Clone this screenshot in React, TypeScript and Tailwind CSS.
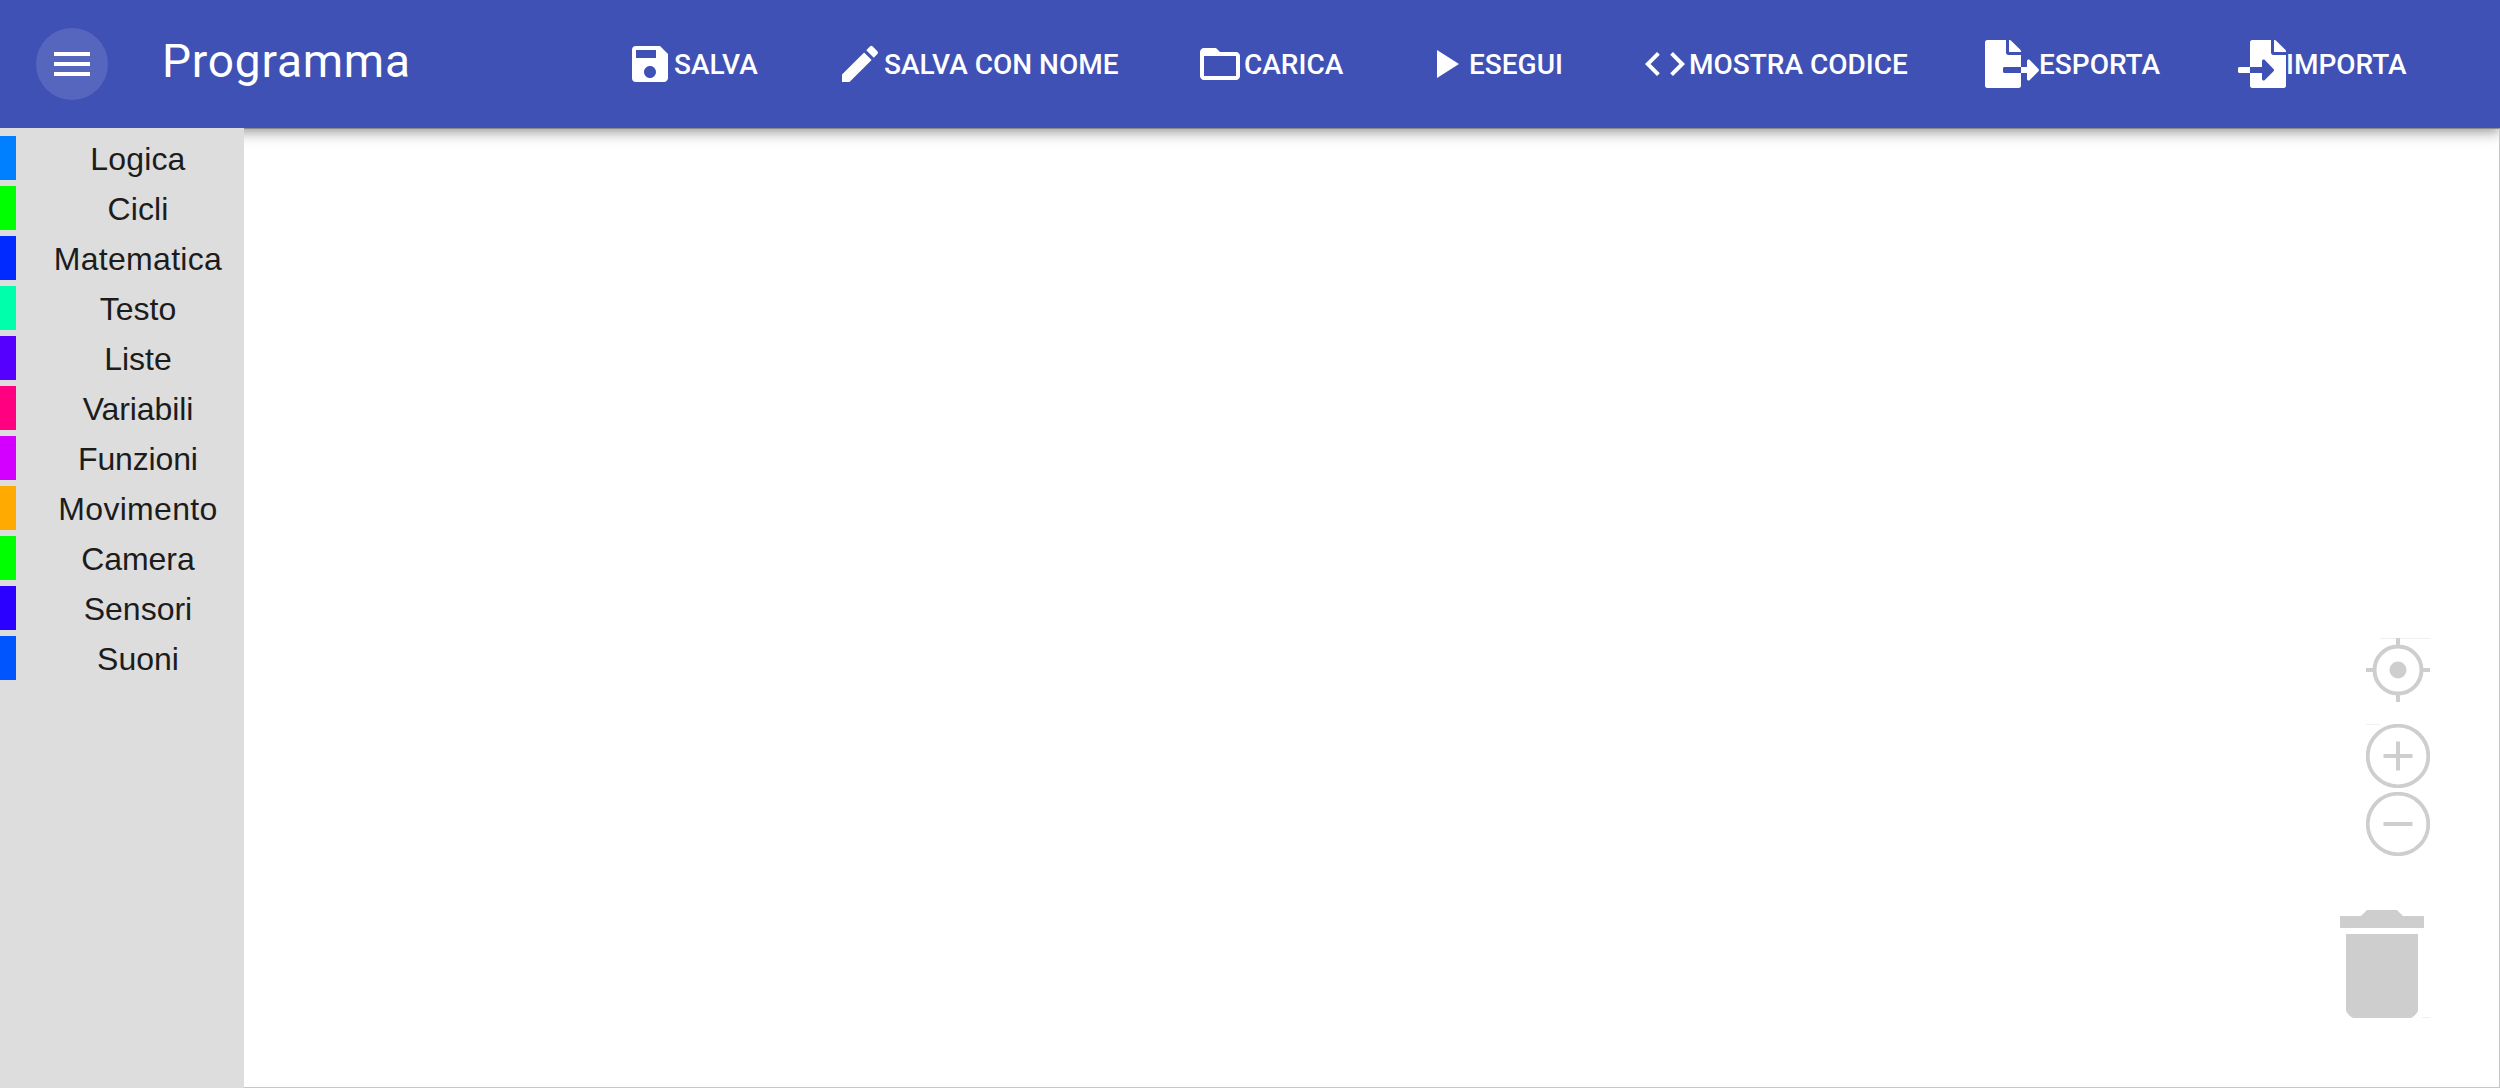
import React from "react";
import { MdMenu, MdSave, MdEdit, MdPlayArrow, MdCode } from "react-icons/md";
import { FaFileExport, FaFileImport } from "react-icons/fa";

const Folder = ({ className }: { className?: string }) => (
  <svg viewBox="0 0 24 24" fill="currentColor" className={className}>
    <path d="M20 6h-8l-2-2H4c-1.1 0-1.99.9-1.99 2L2 18c0 1.1.9 2 2 2h16c1.1 0 2-.9 2-2V8c0-1.1-.9-2-2-2zm0 12H4V8h16v10z" />
  </svg>
);

const actions = [
  { label: "SALVA", Icon: MdSave, width: "w-[210px]", icon: "size-12" },
  { label: "SALVA CON NOME", Icon: MdEdit, width: "w-[360px]", icon: "size-12" },
  { label: "CARICA", Icon: Folder, width: "w-[225px]", icon: "size-12" },
  { label: "ESEGUI", Icon: MdPlayArrow, width: "w-[220px]", icon: "size-12" },
  { label: "MOSTRA CODICE", Icon: MdCode, width: "w-[344px]", icon: "size-12" },
  { label: "ESPORTA", Icon: FaFileExport, width: "w-[253px]", icon: "h-12 w-[54px]" },
  { label: "IMPORTA", Icon: FaFileImport, width: "w-[200px]", icon: "size-12" },
];

const categories = [
  ["Logica", "bg-[#0080ff]", "tracking-[0.15px]"],
  ["Cicli", "bg-[#00ff00]", "tracking-[0.15px]"],
  ["Matematica", "bg-[#002aff]", "tracking-[0.3px]"],
  ["Testo", "bg-[#00ffaa]", "tracking-normal"],
  ["Liste", "bg-[#5500ff]", "tracking-normal"],
  ["Variabili", "bg-[#ff0080]", "tracking-[-0.1px]"],
  ["Funzioni", "bg-[#d400ff]", "tracking-[-0.15px]"],
  ["Movimento", "bg-[#ffaa00]", "tracking-[0.3px]"],
  ["Camera", "bg-[#00ff00]", "tracking-[-0.1px]"],
  ["Sensori", "bg-[#2b00ff]", "tracking-normal"],
  ["Suoni", "bg-[#0055ff]", "tracking-normal"],
];

function Header() {
  return (
    <header className="flex h-32 shrink-0 items-center bg-[#3f51b5] pl-9 text-white shadow-[0_4px_8px_-2px_rgba(0,0,0,0.2),0_8px_10px_0_rgba(0,0,0,0.14),0_2px_20px_0_rgba(0,0,0,0.12)]">
      <button className="flex size-[72px] items-center justify-center rounded-full bg-white/12">
        <MdMenu className="size-12" />
      </button>
      <h1 className="ml-[54px] w-[464px] pb-[6px] font-['Roboto'] text-[46px] leading-none tracking-[0.8px]">
        Programma
      </h1>
      <nav className="flex items-center font-['Roboto'] text-[28px] font-medium leading-none">
        {actions.map(({ label, Icon, width, icon }) => (
          <button key={label} className={`flex items-center whitespace-nowrap ${width}`}>
            <Icon className={`shrink-0 ${icon}`} />
            <span className="pt-0.5">{label}</span>
          </button>
        ))}
      </nav>
    </header>
  );
}

function Toolbox() {
  return (
    <aside className="z-10 flex w-[244px] shrink-0 flex-col gap-1.5 bg-[#ddd] pt-2">
      {categories.map(([name, color, tracking]) => (
        <div key={name} className="flex h-11 items-center">
          <span className={`h-11 w-4 ${color}`} />
          <span
            className={`ml-4 w-[213px] pt-0.5 text-center font-['Liberation_Sans'] text-[32px] leading-[44px] text-[#1c1c1c] ${tracking}`}
          >
            {name}
          </span>
        </div>
      ))}
    </aside>
  );
}

function Controls() {
  return (
    <div className="flex flex-col items-end text-[#cecece]">
      <div className="mr-[69px] flex flex-col">
        <svg viewBox="0 0 64 64" className="size-16" fill="none" stroke="currentColor" strokeWidth="4">
          <circle cx="32" cy="32" r="23.5" />
          <circle cx="32" cy="32" r="8.5" fill="currentColor" stroke="none" />
          <path d="M32 0v8M32 56v8M0 32h8M56 32h8" />
          <path d="M14 .5h50" strokeWidth="1" opacity=".3" />
        </svg>
        <svg viewBox="0 0 64 64" className="mt-[22px] size-16" fill="none" stroke="currentColor" strokeWidth="4">
          <circle cx="32" cy="32" r="30.3" strokeWidth="3.8" />
          <path d="M17.5 32h29M32 17.5v29" />
          <path d="M0 .5h14" strokeWidth="1" opacity=".3" />
        </svg>
        <svg viewBox="0 0 64 64" className="mt-1 size-16" fill="none" stroke="currentColor" strokeWidth="4">
          <circle cx="32" cy="32" r="30.3" strokeWidth="3.8" />
          <path d="M17.5 32h29" />
        </svg>
      </div>
      <svg viewBox="0 0 90 108" className="mb-[69px] mr-[69px] mt-[54px] h-[108px] w-[90px]" fill="currentColor">
        <path d="M0 6h21l6-6h30l6 6h21v12H0zM6 24h72v76q0 2-2 4l-2 2q-2 2-4 2H14q-2 0-4-2l-2-2q-2-2-2-4z" />
        <path d="M82 107h8v1h-8z" opacity=".3" />
      </svg>
    </div>
  );
}

export default function App() {
  return (
    <div className="flex h-[1088px] w-[2500px] flex-col overflow-hidden bg-white">
      <Header />
      <div className="flex min-h-0 flex-1">
        <Toolbox />
        <main className="flex flex-1 items-end justify-end border-b border-r border-t border-b-[#c6c6c6] border-r-[#c6c6c6] border-t-[#8c8c8c]">
          <Controls />
        </main>
      </div>
    </div>
  );
}
